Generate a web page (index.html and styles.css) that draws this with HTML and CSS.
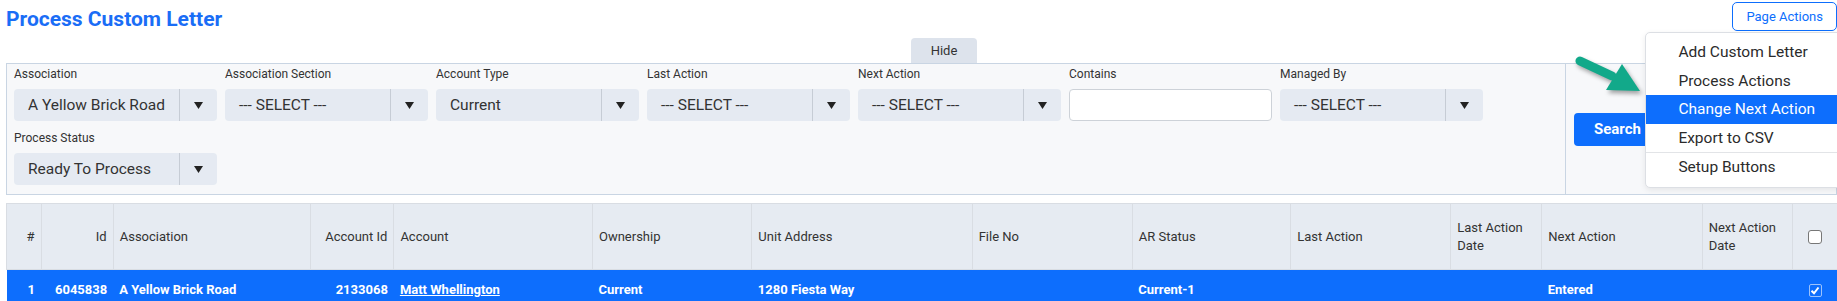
FILE: index.html
```html
<!DOCTYPE html>
<html lang="en">
<head>
<meta charset="utf-8">
<title>Process Custom Letter</title>
<link rel="stylesheet" href="styles.css">
</head>
<body>
<div class="page">
  <header class="topbar">
    <h1 class="title">Process Custom Letter</h1>
    <div class="actions">
      <button class="btn-outline" type="button">Page Actions</button>
      <ul class="menu">
        <li>Add Custom Letter</li>
        <li>Process Actions</li>
        <li class="active">Change Next Action</li>
        <li>Export to CSV</li>
        <li class="divider"></li>
        <li>Setup Buttons</li>
      </ul>
    </div>
  </header>

  <div class="tabrow"><span class="hide-tab">Hide</span></div>

  <section class="filters">
    <div class="fields">
      <div class="field">
        <label>Association</label>
        <div class="select"><span class="val">A Yellow Brick Road</span><span class="caret"><svg width="9" height="7" viewBox="0 0 9 7"><polygon points="0,0 9,0 4.5,7" fill="#222"/></svg></span></div>
      </div>
      <div class="field">
        <label>Association Section</label>
        <div class="select"><span class="val">--- SELECT ---</span><span class="caret"><svg width="9" height="7" viewBox="0 0 9 7"><polygon points="0,0 9,0 4.5,7" fill="#222"/></svg></span></div>
      </div>
      <div class="field">
        <label>Account Type</label>
        <div class="select"><span class="val">Current</span><span class="caret"><svg width="9" height="7" viewBox="0 0 9 7"><polygon points="0,0 9,0 4.5,7" fill="#222"/></svg></span></div>
      </div>
      <div class="field">
        <label>Last Action</label>
        <div class="select"><span class="val">--- SELECT ---</span><span class="caret"><svg width="9" height="7" viewBox="0 0 9 7"><polygon points="0,0 9,0 4.5,7" fill="#222"/></svg></span></div>
      </div>
      <div class="field">
        <label>Next Action</label>
        <div class="select"><span class="val">--- SELECT ---</span><span class="caret"><svg width="9" height="7" viewBox="0 0 9 7"><polygon points="0,0 9,0 4.5,7" fill="#222"/></svg></span></div>
      </div>
      <div class="field">
        <label>Contains</label>
        <input class="text-input" type="text">
      </div>
      <div class="field">
        <label>Managed By</label>
        <div class="select"><span class="val">--- SELECT ---</span><span class="caret"><svg width="9" height="7" viewBox="0 0 9 7"><polygon points="0,0 9,0 4.5,7" fill="#222"/></svg></span></div>
      </div>
      <div class="field">
        <label>Process Status</label>
        <div class="select"><span class="val">Ready To Process</span><span class="caret"><svg width="9" height="7" viewBox="0 0 9 7"><polygon points="0,0 9,0 4.5,7" fill="#222"/></svg></span></div>
      </div>
    </div>
    <div class="search-col">
      <button class="btn-primary" type="button">Search</button>
    </div>
  </section>

  <table class="grid">
    <colgroup>
      <col class="c-num"><col class="c-id"><col class="c-assoc"><col class="c-accid"><col class="c-acc">
      <col class="c-own"><col class="c-addr"><col class="c-file"><col class="c-ar"><col class="c-last">
      <col class="c-lastd"><col class="c-next"><col class="c-nextd"><col class="c-chk">
    </colgroup>
    <thead>
      <tr>
        <th class="r">#</th>
        <th class="r">Id</th>
        <th>Association</th>
        <th class="r">Account Id</th>
        <th>Account</th>
        <th>Ownership</th>
        <th>Unit Address</th>
        <th>File No</th>
        <th>AR Status</th>
        <th>Last Action</th>
        <th>Last Action Date</th>
        <th>Next Action</th>
        <th>Next Action Date</th>
        <th class="c"><span class="checkbox"></span></th>
      </tr>
    </thead>
    <tbody>
      <tr class="selected">
        <td class="r">1</td>
        <td class="r">6045838</td>
        <td>A Yellow Brick Road</td>
        <td class="r">2133068</td>
        <td><a class="link" href="#">Matt Whellington</a></td>
        <td>Current</td>
        <td>1280 Fiesta Way</td>
        <td></td>
        <td>Current-1</td>
        <td></td>
        <td></td>
        <td>Entered</td>
        <td></td>
        <td class="c"><span class="checkbox checked"><svg width="10" height="9" viewBox="0 0 10 9"><polyline points="1.5,4.8 4,7.3 8.5,1.5" fill="none" stroke="#fff" stroke-width="2"/></svg></span></td>
      </tr>
    </tbody>
  </table>

  <svg class="arrow" width="90" height="60" viewBox="1570 45 90 60">
    <line x1="1580" y1="61" x2="1612" y2="76" stroke="#12a98a" stroke-width="9" stroke-linecap="round"/>
    <polygon points="1606,90 1622,64 1640,91" fill="#12a98a"/>
  </svg>
</div>
</body>
</html>
```

FILE: styles.css
```css
html, body {
  margin: 0;
  padding: 0;
  overflow: hidden;
  background: #fff;
}

body {
  font-family: Roboto, "Liberation Sans", Arial, sans-serif;
  color: #333;
}

.page {
  position: relative;
  padding: 0 0 0 6px;
  width: 1831px;
}

.topbar {
  display: flex;
  justify-content: space-between;
  align-items: flex-start;
  height: 38px;
}

.title {
  margin: 0;
  padding-top: 7px;
  font-size: 21px;
  line-height: 24px;
  font-weight: 700;
  color: #1a6df6;
}

.actions {
  position: relative;
  margin-top: 2px;
  z-index: 5;
}

.btn-outline {
  height: 29px;
  padding: 0 13px;
  border: 1px solid #0d6efd;
  border-radius: 5px;
  background: #fff;
  color: #0d6efd;
  font-family: inherit;
  font-size: 13px;
}

.menu {
  position: absolute;
  top: calc(100% + 1px);
  left: -87px;
  width: 200px;
  margin: 0;
  padding: 5px 0;
  list-style: none;
  background: #fff;
  border: 1px solid #dcdfe4;
  border-radius: 5px;
  box-shadow: 0 2px 6px rgba(0, 0, 0, 0.08);
}

.menu li {
  height: 28.5px;
  line-height: 28.5px;
  padding-left: 32px;
  font-size: 15.5px;
  color: #2b2b2b;
  white-space: nowrap;
}

.menu li.active {
  background: #0d6efd;
  color: #fff;
}

.menu li.divider {
  height: 1px;
  background: #e2e4e7;
}

.tabrow {
  display: flex;
  height: 25px;
}

.hide-tab {
  margin-left: 905px;
  width: 66px;
  height: 25px;
  line-height: 25px;
  text-align: center;
  font-size: 13px;
  color: #333;
  background: #dde3ec;
  border-radius: 4px 4px 0 0;
}

.filters {
  display: flex;
  background: #f7f8fa;
  border: 1px solid #c9d5e3;
}

.fields {
  width: 1551px;
  display: flex;
  flex-wrap: wrap;
  column-gap: 8px;
  row-gap: 8px;
  padding: 1px 0 9px 7px;
  border-right: 1px solid #c9d5e3;
}

.field {
  width: 203px;
  display: flex;
  flex-direction: column;
}

.field label {
  font-size: 12px;
  line-height: 18px;
  color: #333;
  margin-bottom: 6px;
  white-space: nowrap;
}

.select {
  display: flex;
  align-items: center;
  height: 32px;
  background: #e5eaf2;
  border-radius: 4px;
}

.select .val {
  flex: 1;
  padding-left: 14px;
  font-size: 15.5px;
  color: #333;
  white-space: nowrap;
}

.select .caret {
  width: 37px;
  height: 100%;
  display: flex;
  align-items: center;
  justify-content: center;
  border-left: 1px solid #c6ccd5;
}

.text-input {
  box-sizing: border-box;
  height: 32px;
  width: 203px;
  margin: 0;
  border: 1px solid #cdd2d8;
  border-radius: 4px;
  background: #fff;
}

.search-col {
  flex: 1;
  display: flex;
  align-items: center;
  padding-left: 8px;
}

.btn-primary {
  height: 33px;
  padding: 0 20px;
  border: none;
  border-radius: 4px;
  background: #0d6efd;
  color: #fff;
  font-family: inherit;
  font-size: 15px;
  font-weight: 700;
}

.grid {
  margin-top: 8px;
  width: 1831px;
  table-layout: fixed;
  border-collapse: collapse;
  font-size: 13px;
}

.c-num { width: 34.5px; }
.c-id { width: 72.2px; }
.c-assoc { width: 197.8px; }
.c-accid { width: 82.9px; }
.c-acc { width: 198.6px; }
.c-own { width: 159.4px; }
.c-addr { width: 220.3px; }
.c-file { width: 160.1px; }
.c-ar { width: 158.4px; }
.c-last { width: 160.1px; }
.c-lastd { width: 91px; }
.c-next { width: 160.4px; }
.c-nextd { width: 90.8px; }
.c-chk { width: 44.5px; }

.grid th {
  height: 65px;
  padding: 0 6px;
  background: #e6ebf2;
  border: 1px solid #d9dde3;
  font-weight: 400;
  line-height: 18px;
  color: #333;
  text-align: left;
  vertical-align: middle;
}

.grid td {
  height: 39px;
  padding: 0 6px;
  font-weight: 700;
  color: #fff;
  white-space: nowrap;
  vertical-align: middle;
}

.grid tr.selected td {
  background: #0d6efd;
}

.grid .r { text-align: right; }
.grid .c { text-align: center; }

.link {
  color: #fff;
  text-decoration: underline;
}

.checkbox {
  display: inline-flex;
  align-items: center;
  justify-content: center;
  box-sizing: border-box;
  width: 14px;
  height: 14px;
  vertical-align: middle;
  background: #fff;
  border: 1px solid #777;
  border-radius: 3px;
}

.checkbox.checked {
  width: 13px;
  height: 13px;
  background: #0d6efd;
  border: 1px solid #9cc2fb;
  border-radius: 2px;
}

.arrow {
  position: absolute;
  left: 1570px;
  top: 45px;
  z-index: 10;
  filter: drop-shadow(2px 3px 2px rgba(0, 0, 0, 0.35));
}
```
